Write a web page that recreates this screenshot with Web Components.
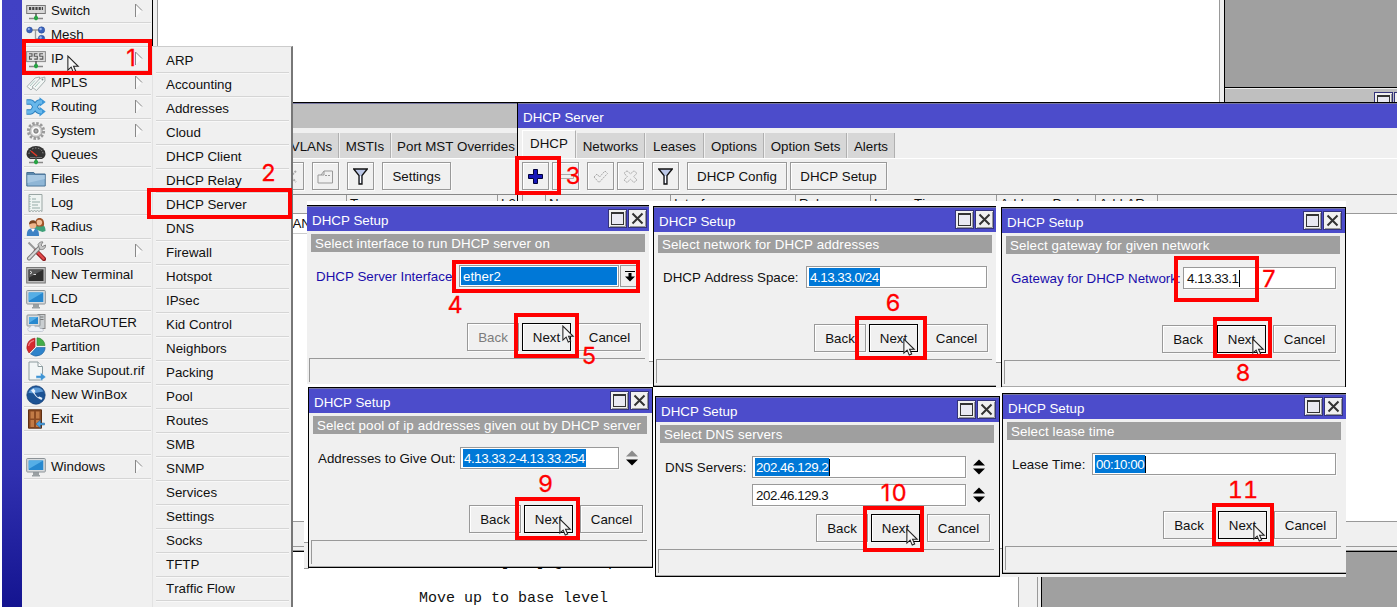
<!DOCTYPE html>
<html lang="en">
<head>
<meta charset="utf-8">
<title>WinBox - DHCP Server setup</title>
<style>
html,body{margin:0;width:1397px;height:607px;overflow:hidden;background:#fff}
body{font:13.33px/16px "Liberation Sans",Arial,sans-serif;color:#111;font-kerning:none}
</style>
</head>
<body>
<winbox-desktop></winbox-desktop>
<script>
const define = (name, css, html, after) => {
  const tpl = document.createElement('template');
  customElements.define(name, class extends HTMLElement {
    connectedCallback() {
      if (this.shadowRoot) return;
      tpl.innerHTML = `<style>*{box-sizing:border-box}${css}</style>${typeof html === 'function' ? html(this) : html}`;
      this.attachShadow({ mode: 'open' }).appendChild(tpl.content.cloneNode(true));
      if (after) after(this);
    }
  });
};
const at = (el, n, d = '') => el.getAttribute(n) ?? d;

const plug = '<path d="M3 17.5h5M12 17.5h5" stroke="#888" stroke-width="1.6"/><path d="M10 12v4" stroke="#555" stroke-width="1.5"/><path d="M8 16l2-1.8 2 1.8v2.2l-2 1.3-2-1.3z" fill="#27a344"/>';
const screen = (x, y, w, h) => `<rect x="${x}" y="${y}" width="${w}" height="${h}" rx=".8" fill="#d9dcde" stroke="#8b9297"/><rect x="${x + 2}" y="${y + 2}" width="${w - 4}" height="${h - 4}" fill="#2788cf"/><path d="M${x + 2} ${y + 2}h${w - 4}L${x + 2} ${y + h - 3}z" fill="#55aee6"/>`;
const ICONS = {
  switch: '<rect x=".7" y="4.5" width="18.6" height="8" fill="#d8d8d8" stroke="#777"/><path d="M3 7.5h14" stroke="#444" stroke-width="3" stroke-dasharray="2.2 1"/>' + plug,
  mesh: '<path d="M3 5h13M9.500 5v9h6" fill="none" stroke="#999" stroke-width="1.3"/><g fill="#3b63bd" stroke="#23448f" stroke-width=".5"><circle cx="3.500" cy="5" r="2.900"/><circle cx="15.500" cy="5" r="3.200"/><circle cx="15.500" cy="13.500" r="3.200"/></g><g fill="#9db7ec"><circle cx="2.800" cy="4" r="1.100"/><circle cx="14.600" cy="4" r="1.200"/><circle cx="14.600" cy="12.500" r="1.200"/></g>',
  ip: '<rect x=".6" y="2.600" width="18.800" height="10" fill="#dcdcdc" stroke="#8a8a8a"/><path d="M3 4.800h3v2.500H3.500v2.800H6M11.500 4.800H8.300v2.500h3v2.800H8.200M17 4.800h-3.200v2.500h3v2.800h-3.200" fill="none" stroke="#555" stroke-width="1.100"/>' + plug,
  mpls: '<g fill="#f4f7f6" stroke="#93a09f" stroke-width=".8"><path d="M1 13.500L9 5l4.500-1v3.500l-8.500 9.500z"/><path d="M6 14l8-8.700 4.800-1.300.2 4-8.500 9.500z"/></g><circle cx="16.500" cy="6.500" r=".9" fill="#788"/><path d="M9 14l5-5.500M4 13l5-5.500" stroke="#a9c9c2"/>',
  routing: '<g fill="none" stroke="#2a7fbe" stroke-width="5.400"><path d="M.5 5h4c4 0 5 9.500 9 9.500h2M.5 15h4c4 0 5-10 9-10h2"/></g><path d="M13.500 .3l6.200 4.700-6.200 4.800zM13.500 9.700l6.200 4.800-6.200 4.900z" fill="#3d98d8"/><g fill="none" stroke="#68b7ea" stroke-width="3.600"><path d="M1 5h3.500c4 0 5 9.500 9 9.500H16M1 15h3.500c4 0 5-10 9-10H16"/></g>',
  system: '<circle cx="10" cy="10" r="7.600" fill="none" stroke="#9a9a9a" stroke-width="3" stroke-dasharray="2.400 1.580"/><circle cx="10" cy="10" r="6.200" fill="#d6d6d6" stroke="#999"/><circle cx="10" cy="10" r="3.500" fill="none" stroke="#fff" stroke-width="1.200"/><circle cx="10" cy="10" r="2" fill="#aaa" stroke="#777"/>',
  queues: '<path d="M.5 9a9.500 8 0 0 1 19 0c0 3-3 5-4.500 5H5C3.500 14 .5 12 .5 9z" fill="#333"/><path d="M3 9a7 6 0 0 1 14 0" fill="none" stroke="#999" stroke-dasharray="1.500 1.500"/><path d="M5 6l6 5" stroke="#e03a28" stroke-width="1.500"/><path d="M4 12.500h12" stroke="#777"/>' + plug,
  files: '<path d="M.8 3.500h7l1 1.500h10.400v12H.8z" fill="#5c89ae" stroke="#466f92"/><path d="M1.500 6h17.200v10.500H1.500z" fill="#8fb6d6"/><path d="M1.500 6h17.200v4L1.500 14z" fill="#a8c8e2"/>',
  log: '<path d="M3 1.500h13v17l-1.500-1-1.500 1-1.500-1-1.500 1-1.500-1-1.500 1-1.500-1-1.500 1-1 0z" fill="#eff4f2" stroke="#9aa6a4"/><path d="M6 6h4M6 9h8M6 12h6M6 15h8" stroke="#93aaa6"/><path d="M4 3v13" stroke="#7fa39c" stroke-dasharray="1 1.500"/>',
  radius: '<path d="M8.500 12c0-4 2-5 5-5s6 1.500 6 7l-3 1z" fill="#3fa079"/><path d="M9.500 8c-.5-5 1-7 4-7s5 2 4.500 7.500l-2 1h-5z" fill="#a0542a"/><circle cx="13.300" cy="5.600" r="2.800" fill="#f2c09a"/><path d="M.8 19c0-6 1.500-7.500 6-7.500s6.200 1.500 6.200 7.500z" fill="#3f83c5"/><path d="M5 12l2 3 2-3z" fill="#fff"/><circle cx="6.800" cy="8" r="3.600" fill="#efb58b"/><path d="M3 7.500c-.5-6 8.500-5.500 7.700 0C9 5.500 6 6.500 3 7.500z" fill="#7a431f"/>',
  tools: '<path d="M2.500 1.500L10 9" stroke="#999" stroke-width="2"/><path d="M10 10l8 8" stroke="#8e1f22" stroke-width="4.400" stroke-linecap="round"/><path d="M10.500 10l7 7.500" stroke="#e2494a" stroke-width="2.400" stroke-linecap="round"/><path d="M3 17.500L14 6" stroke="#7c7c7c" stroke-width="4" stroke-linecap="round"/><path d="M3 17.500L14 6" stroke="#d8d8d8" stroke-width="2" stroke-linecap="round"/><path d="M12 3.500c2-3.500 5-2.500 5-2.500l-2 3 1.500 1.500 3-1.500c.5 4-3.500 5.500-6 4z" fill="#c7c7c7" stroke="#7c7c7c" stroke-width=".9"/>',
  terminal: '<rect x=".7" y="2.500" width="18.600" height="15.500" fill="#bbb" stroke="#777"/><rect x="2.500" y="4.500" width="15" height="11.500" fill="#2e2e2e"/><path d="M2.500 4.500h15L2.500 13z" fill="#555"/><path d="M4 6l2 1.500L4 9M7.500 9.500H10" fill="none" stroke="#eee" stroke-width=".9"/>',
  lcd: '<path d="M7 15h6v3h1v1.500H6V18h1z" fill="#9aa0a3"/>' + screen(.7, 1.500, 18.600, 13.500),
  meta: '<rect x="12" y="1.500" width="7" height="14" fill="#c9ced1" stroke="#888"/><path d="M13.500 4h4M13.500 6.500h4" stroke="#777"/>' + screen(1, 2, 13, 11) + '<path d="M4 18.500c-3-.5-3-4 0-4 .5-3 5-2.500 5.500-.5 2-1.500 5 0 4.500 1.500 4-.5 4.500 3 1.500 3z" fill="#edf0f5" stroke="#b5bcc9" stroke-width=".7"/>',
  partition: '<path d="M9 10V1.200A9 9 0 0 0 3 16z" fill="#d7292e" stroke="#9c1b20" stroke-width=".6"/><path d="M11 8.500V.8a8 8 0 0 1 8 7.700z" fill="#43ad49" stroke="#2d8233" stroke-width=".6"/><path d="M10.500 10.500h8.700a9 9 0 0 1-14.700 6.500z" fill="#2e83cb" stroke="#1d5f9c" stroke-width=".6"/><path d="M8 3.500A7 7 0 0 0 2.500 9" fill="none" stroke="#f2888a" stroke-width="1.200"/>',
  supout: '<path d="M3 1h9l4.500 4.500V19H3z" fill="#f2f6f6" stroke="#8d9c9f"/><path d="M12 1v4.500h4.500" fill="#fff" stroke="#8d9c9f"/><path d="M10 14.500h4.500v-3l5.500 4.500-5.500 4v-2.800H10z" fill="#3e94d4" stroke="#fff" stroke-width=".4"/>',
  winbox: '<circle cx="10" cy="10" r="9.200" fill="#1c5394" stroke="#153f77" stroke-width=".7"/><path d="M2.500 8a8 7 0 0 1 15-1.500c-5 1-8 2-15 1.500z" fill="#5c9ad6"/><path d="M5 5.500l3 3.500c2 3 4 4.500 7.500 6l1-2-3-1.500-1.500.8C10.500 11 9 9 8.500 7.500L9.500 6 7.500 3.500z" fill="#e7f2fc"/>',
  exit: '<path d="M2.500.8h13v18.400h-13z" fill="#8b4a22" stroke="#5e2f13"/><path d="M4.500 2.500h3.500v7H4.500zM10 2.500h3.500v7H10zM4.500 11h3.500v7H4.500zM10 11h3.500v7H10z" fill="#c27b46"/><path d="M18.500 14h-4v-3L10 15l4.500 4v-3h4z" fill="#4c9fdc" stroke="#1f5f96" stroke-width=".5"/>',
};
ICONS.windows = ICONS.lcd;
const FUNNEL = '<svg width="15" height="17" viewBox="0 0 15 17"><path d="M.7 1h13.600L9 7.500V16H6V7.500z" fill="#bcc8e8" stroke="#111" stroke-width="1.300"/><path d="M7.500 8v7" stroke="#fff"/></svg>';

/* ---- small controls ---- */
define('ui-button', `:host{display:block;flex:none;height:28px}
.b{height:100%;display:flex;align-items:center;justify-content:center;border:1px solid #999;box-shadow:inset 1px 1px #fff,1px 1px #fafafa;white-space:nowrap;line-height:18px;padding-top:1px}
:host([primary]) .b{border-color:#000}:host([disabled]){color:#7c7c7c}::slotted(svg){display:block}`,
  e => `<div class="b" style="width:${at(e, 'w')}px"><slot></slot></div>`);

define('ui-tab', `:host{display:block;flex:none;align-self:flex-end}
.t{height:25px;padding-top:3px;background:#d7d7d7;border-right:1px solid #b0b0b0;margin-right:1px;display:flex;align-items:center;justify-content:center;white-space:nowrap}
:host([active]) .t{height:28px;background:#f0f0f0;border-left:1px solid #fff;border-top:1px solid #fff;padding:0 0 1px}`,
  e => `<div class="t" style="width:${at(e, 'w')}px"><slot></slot></div>`);

define('ui-column', `:host{display:block;flex:none}.c{height:100%;border-left:1px solid #999;padding:0 0 0 3px;line-height:17px;white-space:nowrap;overflow:hidden}`,
  e => `<div class="c" style="width:${at(e, 'w')}px"><slot></slot></div>`);

define('title-button', `:host{display:block;width:19px;height:19px;flex:none}svg{display:block}`,
  e => `<svg width="19" height="19"><rect x=".5" y=".5" width="18" height="18" fill="#f0f0f0" stroke="#33337a"/><path d="M17.500 2v15.500H2" fill="none" stroke="#999"/>${at(e, 'kind') === 'max' ? '<rect x="3.500" y="3.500" width="12" height="12" fill="#e9e9f2" stroke="#333"/><path d="M3 4h13" stroke="#333" stroke-width="2"/>' : '<path d="M4.500 4.500l10 10M14.500 4.500l-10 10" stroke="#333" stroke-width="2"/>'}</svg>`);

define('mouse-pointer', `:host{display:block;position:absolute}svg{display:block}`,
  '<svg width="14" height="19" viewBox="0 0 13 18"><path d="M.7 1v13.300l3.100-2.800 2 4.700 2.300-1-2-4.500h4.400z" fill="#f6f6f6" stroke="#222" stroke-width="1"/></svg>',
  e => { const [x, y] = at(e, 'pos').split(','); e.style.left = x + 'px'; e.style.top = y + 'px'; });

/* ---- menus ---- */
define('menu-item', `:host{display:block;height:24px;flex:none}
.r{height:24px;border-bottom:1px solid #d5d5d5;box-shadow:0 1px #f8f8f8;display:flex;align-items:center;padding:0 8px 0 2px;white-space:nowrap}
svg{display:block;flex:none}.l{margin-left:5px;flex:1}.sub .l{margin-left:7px}
.sub.r{padding-left:3px}`,
  e => at(e, 'icon') || e.hasAttribute('blank')
    ? `<div class="r">${at(e, 'icon') ? `<svg width="20" height="20" viewBox="0 0 20 20">${ICONS[at(e, 'icon')]}</svg>` : ''}<span class="l"><slot></slot></span>${e.hasAttribute('more') ? '<svg width="8" height="15" viewBox="0 0 8 15"><path d="M.5 1v13L7 7.500z" fill="#fafafa"/><path d="M.5 14V1L7 7.500" fill="none" stroke="#888"/></svg>' : ''}</div>`
    : '<div class="r sub"><span class="l"><slot></slot></span></div>');

const MAIN = [['switch', 'Switch', 1], ['mesh', 'Mesh'], ['ip', 'IP', 1], ['mpls', 'MPLS', 1], ['routing', 'Routing', 1], ['system', 'System', 1], ['queues', 'Queues'], ['files', 'Files'], ['log', 'Log'], ['radius', 'Radius'], ['tools', 'Tools', 1], ['terminal', 'New Terminal'], ['lcd', 'LCD'], ['meta', 'MetaROUTER'], ['partition', 'Partition'], ['supout', 'Make Supout.rif'], ['winbox', 'New WinBox'], ['exit', 'Exit'], null, ['windows', 'Windows', 1]];
define('main-menu', `:host{display:flex;height:607px;width:158px;flex:none}
.rail{width:20px;margin-left:2px;background:linear-gradient(#4141c4 0,#3c3cbe 60%,#3030b0 78%,#141490 100%)}
.m{width:130px;background:#f0f0f0;margin-top:-1px;padding:0 1px 0 2px;display:flex;flex-direction:column}
.edge{width:6px;background:#f0f0f0;border-left:1px solid #000;border-right:1px solid #999}`,
  () => `<div class="rail"></div><div class="m">${MAIN.map(m => m ? `<menu-item icon="${m[0]}" ${m[2] ? 'more' : ''}>${m[1]}</menu-item>` : '<menu-item blank></menu-item>').join('')}</div><div class="edge"></div>`);

const SUB = ['ARP', 'Accounting', 'Addresses', 'Cloud', 'DHCP Client', 'DHCP Relay', 'DHCP Server', 'DNS', 'Firewall', 'Hotspot', 'IPsec', 'Kid Control', 'Neighbors', 'Packing', 'Pool', 'Routes', 'SMB', 'SNMP', 'Services', 'Settings', 'Socks', 'TFTP', 'Traffic Flow', 'UPnP'];
define('ip-submenu', `:host{display:block;position:absolute;left:152px;top:46px;width:141px;height:580px;background:#f0f0f0;border:1px solid #e2e2e2;border-top-color:#ccc;border-right:2px solid #777;padding:2px 2px 0 3px;box-sizing:border-box}`,
  () => SUB.map(s => `<menu-item>${s}</menu-item>`).join(''));

/* ---- list windows ---- */
define('list-window', `:host{display:flex;flex-direction:column;position:absolute;top:102px;height:450px;background:#f0f0f0;border:1px solid #000;box-sizing:border-box;overflow:hidden}
.title{height:25px;flex:none;background:#bfbfbf;color:#fff;padding:7px 5px 0;box-shadow:inset 0 1px #7777a0}
:host([active]) .title{background:#4c4ccb}
.tabs{height:31px;flex:none;display:flex;padding:0 4px;border-bottom:1px solid #fff}
.tools{height:35px;flex:none;display:flex;padding:3px 4px 0}
.head{height:20px;flex:none;display:flex;border-top:1px solid #888;border-bottom:1px solid #999}
.body{flex:1;background:#fff;border-bottom:1px solid #999}
.status{height:29px;flex:none;border-bottom:1px solid #999;box-shadow:inset 0 -3px #f0f0f0,inset 0 -4px #999}`,
  e => `<div class="title">${at(e, 'name')}</div><div class="tabs"><slot name="tabs"></slot></div><div class="tools"><slot name="tools"></slot></div><div class="head"><slot name="head"></slot></div><div class="body"><slot></slot></div><div class="status"></div>`);

define('bridge-window', `:host{display:contents}list-window{left:272px;width:246px;z-index:0}
.s{display:flex}.g8{gap:8px}.row{padding:2px 0 0 12px;border-bottom:1px solid #ccc;height:20px}`,
  `<list-window>
<div slot="tabs" class="s"><ui-tab w="62"><span style="padding-left:8px">VLANs</span></ui-tab><ui-tab w="51">MSTIs</ui-tab><ui-tab w="126"><span style="padding-left:3px">Port MST Overrides</span></ui-tab></div>
<div slot="tools" class="s g8"><ui-button w="27"><svg width="15" height="15"><path d="M2 2l11 11M13 2L2 13" stroke="#aaa" stroke-width="2" stroke-dasharray="2 1"/></svg></ui-button><ui-button w="27"><svg width="17" height="14" viewBox="0 0 17 14"><path d="M1 13V5h3l3-4h8.500v12zM4 5h3V1" fill="none" stroke="#999"/><path d="M8 5.500h5" stroke="#999" stroke-dasharray="2 1"/></svg></ui-button><ui-button w="27">${FUNNEL}</ui-button><ui-button w="69">Settings</ui-button></div>
<div slot="head" class="s"><ui-column w="73"></ui-column><ui-column w="151">Type</ui-column><ui-column w="30">L2 MTU</ui-column></div>
<div class="row">LAN</div></list-window>`);

define('dhcp-window', `:host{display:contents}list-window{left:517px;width:900px;z-index:1}.s{display:flex}`,
  `<list-window active name="DHCP Server">
<div slot="tabs" class="s"><ui-tab active w="54">DHCP</ui-tab><ui-tab w="68">Networks</ui-tab><ui-tab w="58">Leases</ui-tab><ui-tab w="59">Options</ui-tab><ui-tab w="82">Option Sets</ui-tab><ui-tab w="47">Alerts</ui-tab></div>
<div slot="tools" class="s" style="gap:3px"><ui-button w="27"><svg width="15" height="15"><path d="M5.500.5h4v5h5v4h-5v5h-4v-5h-5v-4h5z" fill="#1616b8" stroke="#00003c"/></svg></ui-button><ui-button w="27"><svg width="17" height="5"><path d="M.5.5h16v4H.5z" fill="none" stroke="#aaa"/></svg></ui-button><ui-button w="27" style="margin-left:5px"><svg width="15" height="13" viewBox="0 0 15 13"><path d="M1 7l3-3 2.500 3L12 1l2.500 2.500-8.500 9z" fill="none" stroke="#aaa" stroke-dasharray="2 .7"/></svg></ui-button><ui-button w="27"><svg width="15" height="13" viewBox="0 0 15 13"><path d="M4 .8l3.500 3 3.500-3 3 2.500-3.300 3.200L14 10l-3 2.500-3.500-3.200L4 12.500 1 10l3.300-3.500L1 3.300z" fill="none" stroke="#aaa" stroke-dasharray="2 .7"/></svg></ui-button><ui-button w="27" style="margin-left:5px">${FUNNEL}</ui-button><ui-button w="100" style="margin-left:5px">DHCP Config</ui-button><ui-button w="97">DHCP Setup</ui-button></div>
<div slot="head" class="s" style="padding-left:4px"><ui-column w="23"></ui-column><ui-column w="125">Name</ui-column><ui-column w="125">Interface</ui-column><ui-column w="75">Relay</ui-column><ui-column w="126">Lease Time</ui-column><ui-column w="99">Address Pool</ui-column><ui-column w="62">Add AR...</ui-column><ui-column w="240"></ui-column></div>
</list-window>`);

/* ---- wizard dialog ---- */
define('text-field', `:host{display:block;flex:none}
.f{height:22px;background:#fff;border:1px solid #999;box-shadow:1px 1px #fafafa;display:flex;align-items:center;padding-left:2px}
.v{height:18px;line-height:20px;padding:0 1px;letter-spacing:-.46px;white-space:nowrap}
.sel{background:#0078d7;color:#fff}.full{width:156px;letter-spacing:0;padding-left:2px;margin-left:-1px}.caret{width:1px;height:17px;background:#000}`,
  e => `<div class="f" style="width:${at(e, 'w')}px"><span class="v ${e.hasAttribute('selected') ? 'sel' : ''} ${e.hasAttribute('full') ? 'full' : ''}"><slot></slot></span>${e.hasAttribute('caret') ? '<i class="caret"></i>' : ''}</div>`);

define('spin-arrows', `:host{display:block;flex:none;margin-left:7px}svg{display:block}`,
  e => `<svg width="12" height="16"><path d="M0 6.500L6 .5l6 6z" fill="${e.hasAttribute('first') ? '#8c8c8c' : '#000'}"/><path d="M0 9.500h12l-6 6z" fill="#000"/></svg>`);

define('drop-button', `:host{display:block;flex:none}.d{width:19px;height:22px;border:1px solid #999;margin-left:1px;display:flex;align-items:center;justify-content:center}`,
  '<div class="d"><svg width="10" height="11"><path d="M0 .5h10" stroke="#000"/><path d="M3.500 2h3v3.500H10L5 10.500 0 5.500h3.500z"/></svg></div>');

define('setup-dialog', `:host{display:flex;flex-direction:column;position:absolute;width:345px;height:181px;box-sizing:border-box;background:#f0f0f0;border:1px solid #000;z-index:3}
.title{height:25px;flex:none;background:#4c4ccb;color:#fff;display:flex;align-items:center;padding:0 3px 0 5px;gap:1px;box-shadow:inset 0 1px #7777a0}
.title span{flex:1;padding-top:5px}
.banner{height:18px;flex:none;margin:3px 5px 0 4px;background:#9f9f9f;color:#fff;padding:2px 0 0 4px;letter-spacing:.12px;white-space:nowrap}
.form{height:71px;flex:none;padding-top:13px;display:flex;flex-direction:column;gap:6px}
.actions{display:flex;flex:none;padding-left:160px}
.status{flex:1;border:1px solid #999;border-width:1px 0 0 1px;margin:7px 5px 2px 2px}
.foot{height:1px;flex:none;background:#aaa}`,
  e => `<div class="title"><span>DHCP Setup</span><title-button kind="max"></title-button><title-button kind="close"></title-button></div><div class="banner">${at(e, 'step')}</div><div class="form"><slot></slot></div><div class="actions"><ui-button w="52" ${e.hasAttribute('first') ? 'disabled' : ''}>Back</ui-button><ui-button primary w="49" style="margin:0 7px 0 3px">Next</ui-button><ui-button w="63">Cancel</ui-button></div><div class="status"></div><div class="foot"></div>`,
  e => { const [x, y] = at(e, 'pos').split(','); e.style.left = x + 'px'; e.style.top = y + 'px'; });

define('form-row', `:host{display:flex;align-items:center;height:22px;flex:none}.l{flex:none;padding:2px 0 0 9px;white-space:nowrap}:host([changed]) .l{color:#1a0dab}`,
  e => `<span class="l" style="width:${at(e, 'lw')}px">${at(e, 'label')}</span><slot></slot>`);

/* ---- callouts ---- */
define('step-mark', `:host{display:block;position:absolute;z-index:6;pointer-events:none;border:4px solid #f00;box-sizing:border-box}`, '',
  e => { const [x, y, r, b] = at(e, 'box').split(',').map(Number); Object.assign(e.style, { left: x + 'px', top: y + 'px', width: r - x + 'px', height: b - y + 'px' }); });
define('step-number', `:host{display:block;position:absolute;z-index:7;width:40px;height:20px;text-align:center;font:23.5px/20px Inter,sans-serif;letter-spacing:0;color:#f00;-webkit-text-stroke:.3px #f00}`, '<slot></slot>',
  e => { const [x, y] = at(e, 'c').split(',').map(Number); e.style.left = x - 20 + 'px'; e.style.top = y - 10 + 'px'; });

define('terminal-window', `:host{display:flex;position:absolute;left:200px;top:552px;width:842px;height:55px;background:#fff;border-right:1px solid #000;box-sizing:border-box}
pre{margin:0;flex:1;padding:2px 0 0 219px;font:15px/18px "Liberation Mono",monospace;letter-spacing:0}
.bar{width:20px;background:#f0f0f0;border-left:1px solid #999;border-right:1px solid #999}.gap{width:3px;background:#f0f0f0}`,
  '<pre>a second [Tab] gives possible options\n\nMove up to base level</pre><div class="bar"></div><div class="gap"></div>');

define('winbox-desktop', `:host{display:flex;position:relative;width:1397px;height:607px;overflow:hidden;background:#fff}
.view{flex:1}
.right{width:178px;height:102px;background:#f0f0f0;border-left:1px solid #999;padding-left:4px;display:flex}
.right .desk{flex:1;background:#a0a0a0;border-left:1px solid #000;display:flex;flex-direction:column}
.desk .g{height:87px}.desk .w{flex:1;background:#bfbfbf;border-top:1px solid #000;box-shadow:inset 0 1px #eee;padding:4px 0 0 149px;display:flex;gap:1px;overflow:hidden}
.low{position:absolute;left:1042px;top:552px;width:355px;height:55px;background:#a0a0a0}
.paper{position:absolute;z-index:2;background:#fff}
.sliver{position:absolute;z-index:2;background:#f0f0f0;border-top:1px solid #999}
ip-submenu{z-index:4}mouse-pointer{z-index:5}`,
`<main-menu></main-menu>
<div class="view"></div>
<div class="right"><div class="desk"><div class="g"></div><div class="w"><title-button kind="max"></title-button><title-button kind="close"></title-button></div></div></div>
<div class="low"></div>
<terminal-window></terminal-window>
<bridge-window></bridge-window>
<dhcp-window></dhcp-window>
<div class="paper" style="left:307px;top:201px;width:1039px;height:367px"></div>
<div class="paper" style="left:304px;top:385px;width:12px;height:183px"></div>
<div class="paper" style="left:652px;top:560px;width:350px;height:17px"></div>
<div class="paper" style="left:1000px;top:560px;width:346px;height:17px;background:#f0f0f0"></div>
<div class="sliver" style="left:304px;top:542px;width:5px;height:27px;border-bottom:1px solid #999"></div>
<div class="sliver" style="left:649px;top:361px;width:5px;height:23px"></div>
<div class="sliver" style="left:996px;top:362px;width:6px;height:26px"></div>
<div class="sliver" style="left:999px;top:548px;width:4px;height:27px"></div>
<setup-dialog pos="306,205" first step="Select interface to run DHCP server on" style="clip-path:inset(0 2px 2px 1px)">
<form-row changed label="DHCP Server Interface:" lw="152"><text-field w="160" selected full>ether2</text-field><drop-button></drop-button></form-row></setup-dialog>
<setup-dialog pos="653,206" step="Select network for DHCP addresses" style="clip-path:inset(0 2px 0 0)">
<form-row label="DHCP Address Space:" lw="152"><text-field w="181" selected>4.13.33.0/24</text-field></form-row></setup-dialog>
<setup-dialog pos="1001,207" step="Select gateway for given network" style="clip-path:inset(0 0 1px 0)">
<form-row changed label="Gateway for DHCP Network:" lw="181"><text-field w="153" caret>4.13.33.1</text-field></form-row></setup-dialog>
<setup-dialog pos="308,387" step="Select pool of ip addresses given out by DHCP server">
<form-row label="Addresses to Give Out:" lw="151"><text-field w="159" selected>4.13.33.2-4.13.33.254</text-field><spin-arrows first></spin-arrows></form-row></setup-dialog>
<setup-dialog pos="655,396" step="Select DNS servers">
<form-row label="DNS Servers:" lw="96"><text-field w="214" selected caret>202.46.129.2</text-field><spin-arrows></spin-arrows></form-row>
<form-row lw="96"><text-field w="214">202.46.129.3</text-field><spin-arrows></spin-arrows></form-row></setup-dialog>
<setup-dialog pos="1002,393" step="Select lease time" style="clip-path:inset(0 1px 0 0)">
<form-row label="Lease Time:" lw="89"><text-field w="244" selected caret>00:10:00</text-field></form-row></setup-dialog>
<ip-submenu></ip-submenu>
<mouse-pointer pos="67,55"></mouse-pointer><mouse-pointer pos="562,325"></mouse-pointer><mouse-pointer pos="903,338"></mouse-pointer><mouse-pointer pos="1252,338"></mouse-pointer><mouse-pointer pos="559,518"></mouse-pointer><mouse-pointer pos="906,528"></mouse-pointer><mouse-pointer pos="1253,524"></mouse-pointer>
<step-mark box="22,39,152,75"></step-mark><step-mark box="147,188,292,219"></step-mark><step-mark box="515,156,561,195"></step-mark><step-mark box="452,260,640,293"></step-mark><step-mark box="514,313,579,358"></step-mark><step-mark box="855,316,927,360"></step-mark><step-mark box="1174,256,1259,302"></step-mark><step-mark box="1213,317,1272,358"></step-mark><step-mark box="515,497,580,540"></step-mark><step-mark box="863,506,924,552"></step-mark><step-mark box="1212,503,1274,546"></step-mark>
<step-number c="131,58">1</step-number><step-number c="268.500,173">2</step-number><step-number c="573,176">3</step-number><step-number c="455,305">4</step-number><step-number c="589,356">5</step-number><step-number c="893,303">6</step-number><step-number c="1269,279">7</step-number><step-number c="1243,373">8</step-number><step-number c="545.500,484">9</step-number><step-number c="894.500,493" style="letter-spacing:1.500px">10</step-number><step-number c="1243,490" style="font-variant-numeric:tabular-nums">11</step-number>`);
</script>
</body>
</html>
